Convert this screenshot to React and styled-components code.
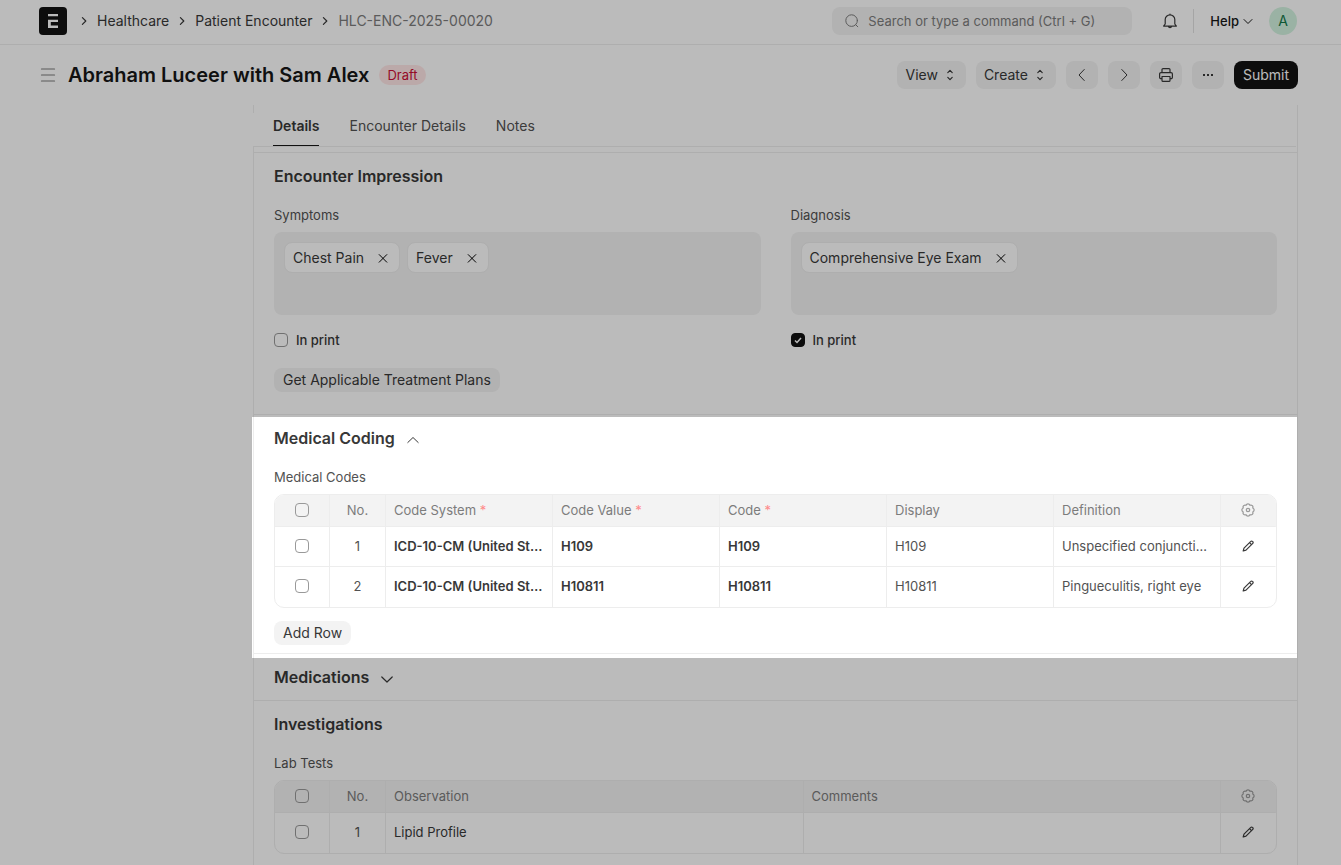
import React, { useState } from 'react';
import styled, { createGlobalStyle, css } from 'styled-components';

const medicalCodes = [
  { system: 'ICD-10-CM (United States)', value: 'H109', code: 'H109', display: 'H109', definition: 'Unspecified conjunctivitis' },
  { system: 'ICD-10-CM (United States)', value: 'H10811', code: 'H10811', display: 'H10811', definition: 'Pingueculitis, right eye' },
];

const labTests = [{ observation: 'Lipid Profile', comments: '' }];

const codeColumns = [
  { key: 'system', label: 'Code System', required: true },
  { key: 'value', label: 'Code Value', required: true },
  { key: 'code', label: 'Code', required: true },
  { key: 'display', label: 'Display' },
  { key: 'definition', label: 'Definition' },
];

const labColumns = [
  { key: 'observation', label: 'Observation', link: true },
  { key: 'comments', label: 'Comments' },
];

const paths = {
  left: <path d="M10.2 2.5L5 8L10.2 13.5" />,
  next: <path d="M5.8 2.5L11 8L5.8 13.5" />,
  crumb: <path d="M6.4 4.6L9.8 8L6.4 11.4" />,
  down: <path d="M2.8 8L8 13L13.2 8" />,
  up: <path d="M2.8 12.5L8 7.5L13.2 12.5" />,
  smallDown: <path d="M4 6.5L8 10.5L12 6.5" />,
  select: <path d="M5.8 5.6L8 3.4L10.2 5.6M5.8 10.4L8 12.6L10.2 10.4" />,
  close: <path d="M4.2 4.6L11.8 12.2M11.8 4.6L4.2 12.2" />,
  menu: <path d="M1.5 2H14.5M1.5 8H14.5M1.5 14H14.5" />,
  search: <path d="M13.8 13.8L11.7 11.7M13.4 7.6a5.8 5.8 0 1 1-11.6 0a5.8 5.8 0 0 1 11.6 0z" />,
  bell: <path d="M8 1.8V1M3.2 11V6.6a4.8 4.8 0 0 1 9.6 0V11l1.6 2.1H1.6L3.2 11zM6.3 13.4a1.8 1.8 0 0 0 3.4 0" />,
  print: <path d="M4 5.6V2.6a1 1 0 0 1 1-1h6a1 1 0 0 1 1 1v3M4 11.6H2.9a1.3 1.3 0 0 1-1.3-1.3V7a1.4 1.4 0 0 1 1.4-1.4h10A1.4 1.4 0 0 1 14.4 7v3.3a1.3 1.3 0 0 1-1.3 1.3H12M4 9.5h8v3.9a1 1 0 0 1-1 1H5a1 1 0 0 1-1-1V9.5z" />,
  edit: <path d="M3.2 13L4 10.2L10.8 3.4a1.1 1.1 0 0 1 1.6 0l.4.4a1.1 1.1 0 0 1 0 1.6L6 12.2L3.2 13zM9.5 4.7L11.5 6.7" />,
  gear: (
    <>
      <path d="M12.71 6.05A2.05 2.05 0 0 1 12.71 9.95A2.05 2.05 0 0 1 9.95 12.71A2.05 2.05 0 0 1 6.05 12.71A2.05 2.05 0 0 1 3.29 9.95A2.05 2.05 0 0 1 3.29 6.05A2.05 2.05 0 0 1 6.05 3.29A2.05 2.05 0 0 1 9.95 3.29A2.05 2.05 0 0 1 12.71 6.05Z" />
      <circle cx="8" cy="8" r="1.7" />
    </>
  ),
};

function Icon({ name, size = 16, weight = 1 }) {
  return (
    <Svg width={size} height={size} viewBox="0 0 16 16" strokeWidth={weight} aria-hidden="true">
      {paths[name]}
    </Svg>
  );
}

function MultiSelect({ id, label, initial, printed }) {
  const [tags, setTags] = useState(initial);

  return (
    <div>
      <Label htmlFor={id}>{label}</Label>
      <TagBox>
        {tags.map(tag => (
          <Tag key={tag}>
            {tag}
            <TagRemove aria-label={`Remove ${tag}`} onClick={() => setTags(tags.filter(t => t !== tag))}>
              <Icon name="close" />
            </TagRemove>
          </Tag>
        ))}
        <TagInput id={id} />
      </TagBox>
      <CheckRow>
        <Checkbox type="checkbox" defaultChecked={printed} />
        In print
      </CheckRow>
    </div>
  );
}

function Grid({ name, columns, rows }) {
  return (
    <GridFrame>
      <Table aria-label={name}>
        <colgroup>
          <col width="55" />
          <col width="56" />
          {columns.map(column => <col key={column.key} />)}
          <col width="55" />
        </colgroup>
        <thead>
          <tr>
            <Th $center><Checkbox type="checkbox" aria-label="Select all" /></Th>
            <Th $center>No.</Th>
            {columns.map(column => (
              <Th key={column.key}>
                {column.label} {column.required && <Required>*</Required>}
              </Th>
            ))}
            <Th $center>
              <CellButton $muted aria-label="Configure columns"><Icon name="gear" weight={1.2} /></CellButton>
            </Th>
          </tr>
        </thead>
        <tbody>
          {rows.map((row, index) => (
            <tr key={index}>
              <Td $center><Checkbox type="checkbox" aria-label={`Select row ${index + 1}`} /></Td>
              <Td $center>{index + 1}</Td>
              {columns.map(column => (
                <Td key={column.key} $bold={column.required} $dark={column.link}>{row[column.key]}</Td>
              ))}
              <Td $center>
                <CellButton aria-label="Edit row"><Icon name="edit" weight={1.2} /></CellButton>
              </Td>
            </tr>
          ))}
        </tbody>
      </Table>
    </GridFrame>
  );
}

export default function App() {
  return (
    <Page>
      <GlobalStyle />
      <Navbar>
        <Crumbs aria-label="Breadcrumb">
          <Logo href="#" aria-label="Home">
            <svg width="28" height="28" viewBox="0 0 28 28">
              <path d="M9 7h10v2.2H9zM9 12.8h10v2.3h-7.2v3.3H19v2.5H9z" fill="#fff" />
            </svg>
          </Logo>
          <Icon name="crumb" weight={1.2} />
          <Crumb href="#">Healthcare</Crumb>
          <Icon name="crumb" weight={1.2} />
          <Crumb href="#">Patient Encounter</Crumb>
          <Icon name="crumb" weight={1.2} />
          <Crumb href="#" $current>HLC-ENC-2025-00020</Crumb>
        </Crumbs>
        <Search>
          <Icon name="search" />
          <SearchInput aria-label="Search" placeholder="Search or type a command (Ctrl + G)" />
        </Search>
        <BellButton aria-label="Notifications"><Icon name="bell" weight={1.2} /></BellButton>
        <HelpButton>Help <Icon name="smallDown" /></HelpButton>
        <Avatar aria-label="Account">A</Avatar>
      </Navbar>

      <PageHead>
        <MenuButton aria-label="Toggle sidebar"><Icon name="menu" weight={1.2} /></MenuButton>
        <Title>Abraham Luceer with Sam Alex</Title>
        <Status>Draft</Status>
        <Actions>
          <Button>View <Icon name="select" weight={1.2} /></Button>
          <Button>Create <Icon name="select" weight={1.2} /></Button>
          <Button $icon aria-label="Previous"><Icon name="left" /></Button>
          <Button $icon aria-label="Next"><Icon name="next" /></Button>
          <Button $icon aria-label="Print"><Icon name="print" weight={1.2} /></Button>
          <Button $icon aria-label="More">
            <svg width="16" height="16" fill="currentColor">
              <rect x="3" y="7" width="2" height="2" />
              <rect x="7" y="7" width="2" height="2" />
              <rect x="11" y="7" width="2" height="2" />
            </svg>
          </Button>
          <Button $primary>Submit</Button>
        </Actions>
      </PageHead>

      <Body>
        <Sidebar />
        <Form>
          <Tabs>
            <Tab href="#" $active>Details</Tab>
            <Tab href="#">Encounter Details</Tab>
            <Tab href="#">Notes</Tab>
          </Tabs>

          <Section>
            <SectionTitle>Encounter Impression</SectionTitle>
            <Columns>
              <MultiSelect id="symptoms" label="Symptoms" initial={['Chest Pain', 'Fever']} />
              <MultiSelect id="diagnosis" label="Diagnosis" initial={['Comprehensive Eye Exam']} printed />
            </Columns>
            <PlanRow>
              <Button $small>Get Applicable Treatment Plans</Button>
            </PlanRow>
          </Section>

          <Section>
            <SectionTitle>Medical Coding <Icon name="up" /></SectionTitle>
            <Label as="div">Medical Codes</Label>
            <Grid name="Medical Codes" columns={codeColumns} rows={medicalCodes} />
            <AddRow>
              <Button $small>Add Row</Button>
            </AddRow>
            <Spotlight />
          </Section>

          <Section>
            <SectionTitle>Medications <Icon name="down" weight={1.2} /></SectionTitle>
          </Section>

          <Section>
            <SectionTitle>Investigations</SectionTitle>
            <Label as="div">Lab Tests</Label>
            <Grid name="Lab Tests" columns={labColumns} rows={labTests} />
          </Section>
        </Form>
      </Body>
    </Page>
  );
}

const GlobalStyle = createGlobalStyle`
  * {
    box-sizing: border-box;
  }
  body {
    margin: 0;
    background: #fff;
    color: #383838;
    font-family: Inter, "Liberation Sans", sans-serif;
    font-size: 14px;
    line-height: 20px;
  }
  button, input {
    font: inherit;
    color: inherit;
  }
  button {
    border: 0;
    padding: 0;
    background: none;
    cursor: pointer;
  }
`;

const Svg = styled.svg`
  flex: none;
  display: block;
  fill: none;
  stroke: currentColor;
  stroke-linecap: round;
  stroke-linejoin: round;
`;
const Page = styled.div`
  display: flex;
  flex-direction: column;
  min-height: 100vh;
`;
const Navbar = styled.header`
  display: flex;
  align-items: center;
  height: 45px;
  padding: 0 44px 2px 39px;
  border-bottom: 1px solid #ededed;
`;
const Crumbs = styled.nav`
  display: flex;
  align-items: center;
  gap: 5px;
  margin-right: auto;
`;
const Logo = styled.a`
  width: 28px;
  height: 28px;
  margin-right: 4px;
  border-radius: 4px;
  background: #131313;
`;
const Crumb = styled.a`
  color: ${props => props.$current ? '#7c7c7c' : '#383838'};
  text-decoration: none;
`;
const Search = styled.div`
  display: flex;
  align-items: center;
  gap: 8px;
  width: 300px;
  height: 28px;
  padding: 0 12px;
  border-radius: 8px;
  background: #f3f3f3;
  color: #7c7c7c;
`;
const SearchInput = styled.input`
  flex: 1;
  min-width: 0;
  padding: 0;
  border: 0;
  outline: 0;
  background: none;
  font-size: 13px;

  &::placeholder {
    color: #7c7c7c;
  }
`;
const BellButton = styled.button`
  height: 24px;
  margin-left: 30px;
  padding-right: 15px;
  border-right: 1px solid #e2e2e2;
  color: #383838;
`;
const HelpButton = styled.button`
  display: flex;
  align-items: center;
  gap: 1px;
  margin: 0 13px 0 16px;
  color: #171717;
  font-size: 13px;
  font-weight: 500;
`;
const Avatar = styled.button`
  width: 28px;
  height: 28px;
  border-radius: 50%;
  background: #d3f3e0;
  color: #137949;
`;
const PageHead = styled.div`
  display: flex;
  align-items: center;
  height: 60px;
  padding: 0 43px 0 40px;
`;
const MenuButton = styled.button`
  margin-right: 12px;
  color: #7c7c7c;
`;
const Title = styled.h1`
  margin: 0;
  color: #171717;
  font-size: 20px;
  font-weight: 600;
`;
const Status = styled.span`
  margin-left: 10px;
  padding: 0 8px;
  border-radius: 10px;
  background: #ffe7e7;
  color: #cc0e37;
  font-size: 13px;
`;
const Actions = styled.div`
  display: flex;
  gap: 10px;
  margin-left: auto;
`;
const Button = styled.button`
  display: flex;
  align-items: center;
  justify-content: center;
  gap: 4px;
  height: 28px;
  padding: 0 8px;
  border-radius: 8px;
  background: #f3f3f3;
  color: #383838;
  ${props => props.$icon && css`
    width: 32px;
  `}
  ${props => props.$small && css`
    height: 24px;
    padding: 0 9px;
  `}
  ${props => props.$primary && css`
    padding: 0 9px;
    background: #131313;
    color: #fff;
  `}
`;
const Body = styled.div`
  flex: 1;
  display: flex;
  padding: 0 43px 0 39px;
`;
const Sidebar = styled.aside`
  width: 214px;
  flex: none;
`;
const Form = styled.main`
  flex: 1;
  min-width: 0;
  border: solid #ededed;
  border-width: 0 1px;
`;
const Tabs = styled.nav`
  display: flex;
  gap: 30px;
  margin: 8px 1px 5px -1px;
  padding: 0 20px;
  border-bottom: 1px solid #ededed;
  background: #fff;
`;
const Tab = styled.a`
  padding: 3px 0 9px;
  border-bottom: 1px solid ${props => props.$active ? '#171717' : 'transparent'};
  color: ${props => props.$active ? '#383838' : '#525252'};
  font-weight: ${props => props.$active ? 600 : 400};
  text-decoration: none;
`;
const Section = styled.section`
  position: relative;
  padding: 11px 20px;
  border-top: 1px solid #ededed;
`;
const SectionTitle = styled.h2`
  display: flex;
  align-items: center;
  gap: 10px;
  margin: 0;
  font-size: 16px;
  font-weight: 600;
  line-height: 24px;
`;
const Columns = styled.div`
  display: grid;
  grid-template-columns: 1fr 1fr;
  gap: 30px;
`;
const Label = styled.label`
  display: block;
  margin: 17px 0 7px;
  color: #525252;
  font-size: 13px;
`;
const TagBox = styled.div`
  display: flex;
  align-items: flex-start;
  gap: 7px;
  height: 83px;
  padding: 10px;
  border-radius: 8px;
  background: #f3f3f3;
`;
const Tag = styled.span`
  display: flex;
  align-items: center;
  gap: 11px;
  height: 31px;
  padding: 0 8px;
  border: 1px solid #ededed;
  border-radius: 8px;
  background: #fff;
  white-space: nowrap;
`;
const TagRemove = styled.button`
  color: #000;
`;
const TagInput = styled.input`
  flex: 1;
  min-width: 0;
  height: 31px;
  padding: 0;
  border: 0;
  outline: 0;
  background: none;
`;
const CheckRow = styled.label`
  display: flex;
  align-items: center;
  gap: 8px;
  margin-top: 15px;
  font-size: 13px;
  font-weight: 500;
`;
const Checkbox = styled.input`
  appearance: none;
  display: block;
  width: 14px;
  height: 14px;
  margin: 0;
  border: 1px solid #999;
  border-radius: 4px;

  &:checked {
    border-color: #131313;
    background: #131313 url("data:image/svg+xml,%3Csvg xmlns='http://www.w3.org/2000/svg' viewBox='0 0 12 12'%3E%3Cpath d='M3 6.5L5 8.5L9 4' fill='none' stroke='%23fff' stroke-width='1.5'/%3E%3C/svg%3E") center / 12px;
  }
`;
const PlanRow = styled.div`
  display: flex;
  padding: 18px 0 11px;
`;
const AddRow = styled.div`
  display: flex;
  margin: 13px 0 -3px;
`;
// dims everything on the page except the section it sits in
const Spotlight = styled.div`
  position: absolute;
  top: 2px;
  right: 0;
  bottom: -5px;
  left: -2px;
  z-index: 10;
  box-shadow: 0 0 0 9999px rgba(0, 0, 0, 0.267);
  pointer-events: none;
`;
const GridFrame = styled.div`
  overflow: hidden;
  border: 1px solid #ededed;
  border-radius: 10px;
`;
const Table = styled.table`
  width: 100%;
  table-layout: fixed;
  border-spacing: 0;
  font-size: 13px;
`;
const cell = css`
  overflow: hidden;
  padding: 0 8px 1px;
  border-right: 1px solid #ededed;
  text-align: left;
  text-overflow: ellipsis;
  white-space: nowrap;

  &:last-child {
    border-right-color: transparent;
  }
  ${props => props.$center && css`
    padding: 0 0 1px;
    text-align: center;
  `}
  ${Checkbox} {
    margin: 0 auto;
  }
`;
const Th = styled.th`
  ${cell}
  height: 32px;
  border-bottom: 1px solid #ededed;
  background: #f3f3f3;
  color: #7c7c7c;
  font-weight: 400;
`;
const Td = styled.td`
  ${cell}
  height: 40px;
  border-bottom: 1px solid #ededed;
  color: ${props => props.$bold || props.$dark ? '#383838' : '#525252'};
  font-weight: ${props => props.$bold ? 600 : 400};

  tr:last-child > & {
    padding-bottom: 2px;
    border-bottom: 0;
  }
`;
const Required = styled.span`
  color: #ff8a8a;
`;
const CellButton = styled.button`
  display: block;
  margin: 0 auto;
  color: ${props => props.$muted ? '#999' : '#383838'};
`;
